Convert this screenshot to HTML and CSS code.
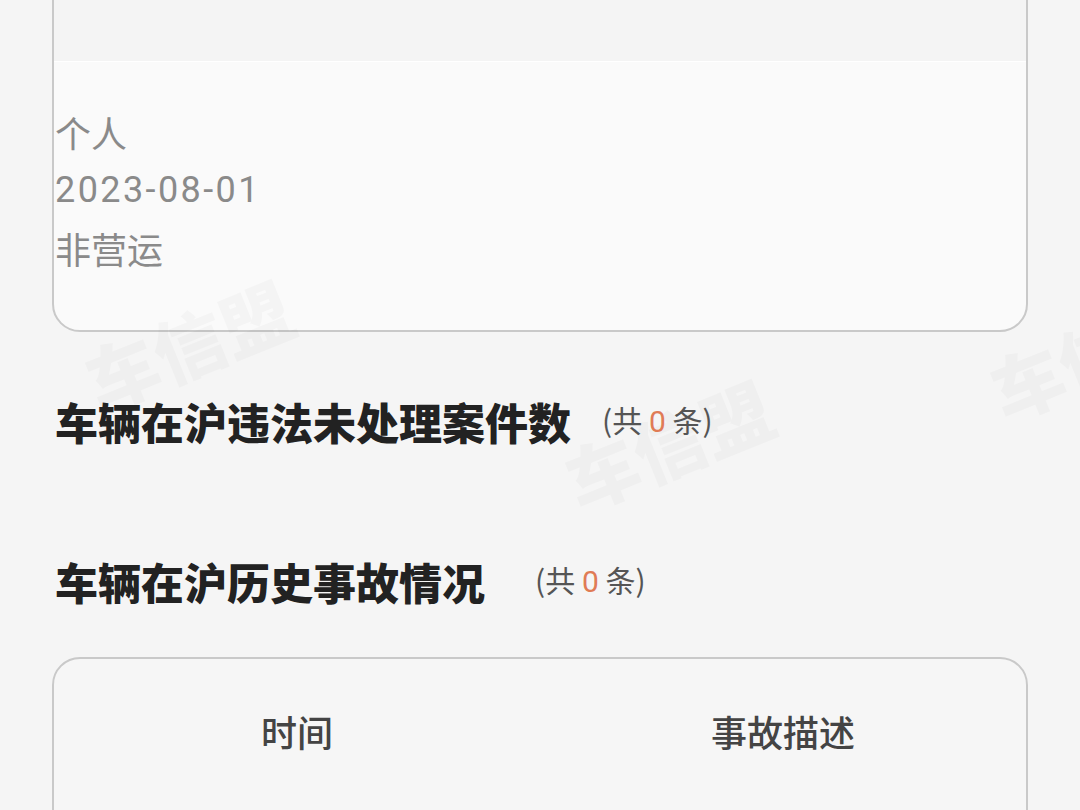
FILE: index.html
```html
<!DOCTYPE html>
<html lang="zh-CN">
<head>
    <meta charset="UTF-8">
    <title>车辆信息</title>
    <link rel="stylesheet" href="styles.css">
</head>
<body>

<div class="page">
    <!-- 车辆基本信息卡片（上半部分已滚出） -->
    <section class="info-card">
        <div class="info-top"></div>
        <div class="info-body">
            <p>个人</p>
            <p class="num">2023-08-01</p>
            <p>非营运</p>
        </div>
    </section>

    <h2 class="block-title title-violation">车辆在沪违法未处理案件数<span class="count">(共 <em>0</em> 条)</span></h2>

    <h2 class="block-title title-accident">车辆在沪历史事故情况<span class="count count-wide">(共 <em>0</em> 条)</span></h2>

    <section class="table-card">
        <div class="table-head">
            <span>时间</span>
            <span>事故描述</span>
        </div>
    </section>

    <!-- 水印 -->
    <div class="watermark wm-1">车信盟</div>
    <div class="watermark wm-2">车信盟</div>
    <div class="watermark wm-3">车信盟</div>
</div>

</body>
</html>
```

FILE: styles.css
```css
body {
    margin: 0;
    padding: 0;
    background: #f5f5f5;
    font-family: "Noto Sans CJK SC", "Noto Sans", sans-serif;
    overflow: hidden;
}

.page {
    position: relative;
    padding: 0 52px;
    height: 810px;
    overflow: hidden;
}

.info-card {
    margin-top: -20px;
    border: 2px solid #c9c9c9;
    border-radius: 0 0 28px 28px;
    background: #fafafa;
    overflow: hidden;
}

.info-top {
    height: 79px;
    background: #f4f4f4;
    border-bottom: 1px solid #ffffff;
}

.info-body {
    padding: 41px 0 53px 1px;
}

.info-body p {
    margin: 0;
    font-size: 36px;
    line-height: 58px;
    color: #8a8a8a;
}

.info-body .num {
    font-family: Roboto, "Noto Sans", sans-serif;
    letter-spacing: 2.4px;
}

.block-title {
    margin: 0;
    padding-left: 3px;
    font-size: 43px;
    line-height: 60px;
    font-weight: 900;
    color: #222;
    display: flex;
    align-items: center;
    position: relative;
    z-index: 1;
}

.title-violation {
    margin-top: 57px;
}

.title-accident {
    margin-top: 97px;
}

.count {
    margin-left: 31px;
    font-size: 30px;
    font-weight: 400;
    color: #555;
}

.count-wide {
    margin-left: 50px;
}

.count em {
    font-style: normal;
    font-family: Roboto, sans-serif;
    color: #e07b55;
}

.table-card {
    margin-top: 45px;
    height: 200px;
    border: 2px solid #c9c9c9;
    border-radius: 28px;
    background: #f6f6f6;
}

.table-head {
    display: grid;
    grid-template-columns: 1fr 1fr;
    padding-top: 42px;
}

.table-head span {
    text-align: center;
    font-size: 36px;
    line-height: 60px;
    font-weight: 500;
    color: #444;
}

.watermark {
    position: absolute;
    font-size: 72px;
    font-weight: 900;
    color: rgba(0, 0, 0, 0.022);
    transform: rotate(-22deg);
    white-space: nowrap;
    pointer-events: none;
}

.wm-1 {
    left: 80px;
    top: 290px;
}

.wm-2 {
    left: 560px;
    top: 390px;
}

.wm-3 {
    left: 985px;
    top: 300px;
}
```
